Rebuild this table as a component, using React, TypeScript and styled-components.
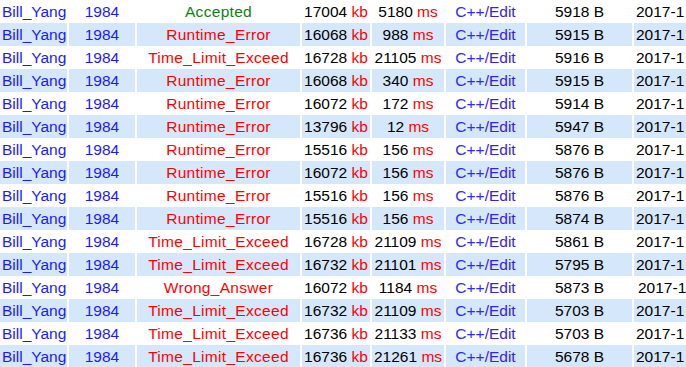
import React from 'react';
import styled, { createGlobalStyle } from 'styled-components';

const GlobalStyle = createGlobalStyle`
    html, body {
        margin: 0;
        padding: 0;
        background: #fff;
        overflow: hidden;
    }
`;

const Table = styled.div`
    display: flex;
    flex-direction: column;
    font-family: 'Liberation Sans', Arial, sans-serif;
    font-size: 15.5px;
    width: 686px;
    overflow: hidden;
`;

const Row = styled.div`
    display: grid;
    grid-template-columns: 67px 66px 163px 68px 72px 79px 105px 52px;
    column-gap: 2px;
    height: 23px;
`;

const Cell = styled.div<{ $even: boolean; $align?: 'left' | 'center'; $pad?: number }>`
    background: ${p => (p.$even ? '#d5e7fb' : '#fff')};
    line-height: 23px;
    white-space: nowrap;
    overflow: hidden;
    text-align: ${p => p.$align ?? 'center'};
    padding-left: ${p => (p.$align === 'left' ? `${p.$pad ?? 2}px` : '0')};
    color: #000;
`;

const User = styled.span`
    color: #1a1aff;
`;

const Problem = styled.span`
    color: #1a1aff;
`;

const Result = styled.span<{ $ok: boolean }>`
    color: ${p => (p.$ok ? '#108010' : '#ff0000')};
    letter-spacing: 0.3px;
`;

const Unit = styled.span`
    color: #ff0000;
`;

const Lang = styled.span`
    color: #2a2aff;
`;

const Edit = styled.span`
    color: #3a22dd;
`;

type Submission = {
    result: string;
    memory: number;
    time: number;
    length: number;
    date: string;
};

const rows: Submission[] = [
    { result: 'Accepted', memory: 17004, time: 5180, length: 5918, date: '2017-1' },
    { result: 'Runtime_Error', memory: 16068, time: 988, length: 5915, date: '2017-1' },
    { result: 'Time_Limit_Exceed', memory: 16728, time: 21105, length: 5916, date: '2017-1' },
    { result: 'Runtime_Error', memory: 16068, time: 340, length: 5915, date: '2017-1' },
    { result: 'Runtime_Error', memory: 16072, time: 172, length: 5914, date: '2017-1' },
    { result: 'Runtime_Error', memory: 13796, time: 12, length: 5947, date: '2017-1' },
    { result: 'Runtime_Error', memory: 15516, time: 156, length: 5876, date: '2017-1' },
    { result: 'Runtime_Error', memory: 16072, time: 156, length: 5876, date: '2017-1' },
    { result: 'Runtime_Error', memory: 15516, time: 156, length: 5876, date: '2017-1' },
    { result: 'Runtime_Error', memory: 15516, time: 156, length: 5874, date: '2017-1' },
    { result: 'Time_Limit_Exceed', memory: 16728, time: 21109, length: 5861, date: '2017-1' },
    { result: 'Time_Limit_Exceed', memory: 16732, time: 21101, length: 5795, date: '2017-1' },
    { result: 'Wrong_Answer', memory: 16072, time: 1184, length: 5873, date: '2017-1' },
    { result: 'Time_Limit_Exceed', memory: 16732, time: 21109, length: 5703, date: '2017-1' },
    { result: 'Time_Limit_Exceed', memory: 16736, time: 21133, length: 5703, date: '2017-1' },
    { result: 'Time_Limit_Exceed', memory: 16736, time: 21261, length: 5678, date: '2017-1' }
];

export default function App() {
    return (
        <>
            <GlobalStyle />
            <Table>
                {rows.map((row, i) => {
                    const even = i % 2 === 1;
                    return (
                        <Row key={i}>
                            <Cell $even={even} $align='left'>
                                <User>Bill_Yang</User>
                            </Cell>
                            <Cell $even={even}>
                                <Problem>1984</Problem>
                            </Cell>
                            <Cell $even={even}>
                                <Result $ok={row.result === 'Accepted'}>{row.result}</Result>
                            </Cell>
                            <Cell $even={even}>
                                {row.memory} <Unit>kb</Unit>
                            </Cell>
                            <Cell $even={even}>
                                {row.time} <Unit>ms</Unit>
                            </Cell>
                            <Cell $even={even}>
                                <Lang>C++</Lang>
                                <Edit>/Edit</Edit>
                            </Cell>
                            <Cell $even={even}>{row.length} B</Cell>
                            <Cell $even={even} $align='left' $pad={row.result === 'Wrong_Answer' ? 4 : 2}>
                                {row.date}
                            </Cell>
                        </Row>
                    );
                })}
            </Table>
        </>
    );
}
